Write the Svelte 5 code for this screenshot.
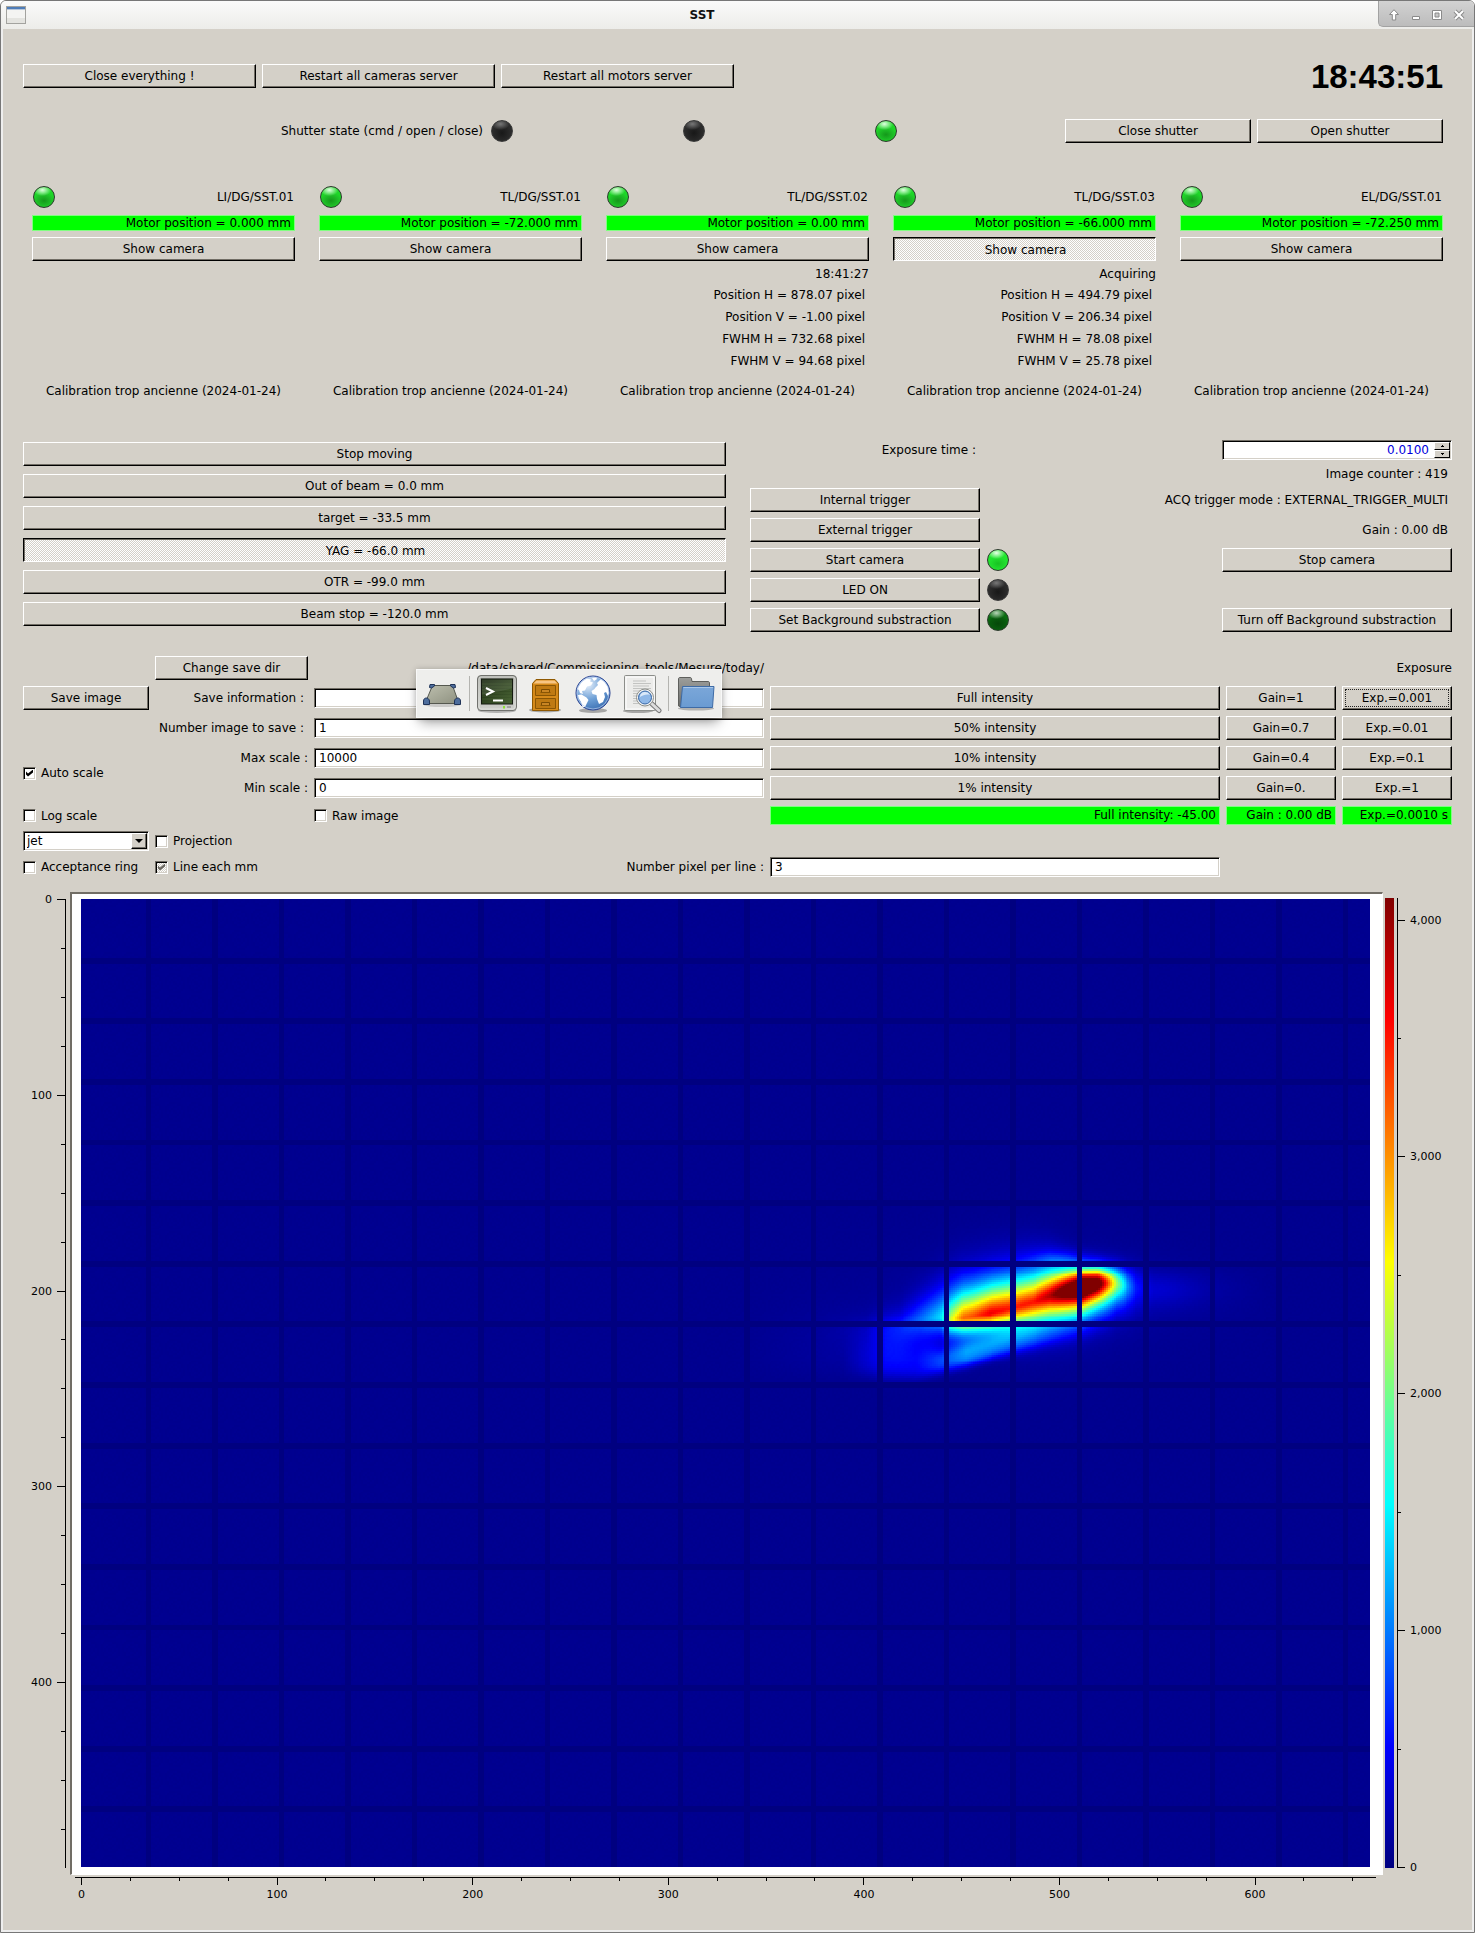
<script>
  import { onMount } from 'svelte';

  const cameras = [
    { name: 'LI/DG/SST.01', motor: '0.000' },
    { name: 'TL/DG/SST.01', motor: '-72.000' },
    {
      name: 'TL/DG/SST.02', motor: '0.00', status: '18:41:27',
      data: ['Position H = 878.07 pixel', 'Position V = -1.00 pixel', 'FWHM H = 732.68 pixel', 'FWHM V = 94.68 pixel']
    },
    {
      name: 'TL/DG/SST.03', motor: '-66.000', status: 'Acquiring', active: true,
      data: ['Position H = 494.79 pixel', 'Position V = 206.34 pixel', 'FWHM H = 78.08 pixel', 'FWHM V = 25.78 pixel']
    },
    { name: 'EL/DG/SST.01', motor: '-72.250' }
  ];

  const moves = ['Stop moving', 'Out of beam = 0.0 mm', 'target = -33.5 mm', 'YAG = -66.0 mm', 'OTR = -99.0 mm', 'Beam stop = -120.0 mm'];

  // Sensor geometry and axis ticks
  const W = 659;
  const H = 495;
  const MAX = 4095;
  const ticks = (end, step, major) =>
    Array.from({ length: Math.floor(end / step) + 1 }, (_, i) => ({ v: i * step, major: (i * step) % major === 0 }));
  const xTicks = ticks(W, 25, 100);
  const yTicks = ticks(H - 1, 25, 100);
  const zTicks = ticks(MAX, 500, 1000);

  let canvas;

  // Beam profile along u: [u, amplitude, centre, width above, width below, exponent above]
  const ridge = [
    [-200, 0, 400, 80, 80, 1.5],
    [60, 0.01, 400, 80, 80, 1.5],
    [200, 0.03, 395, 50, 60, 1.5],
    [300, 0.12, 385, 55, 60, 1.6],
    [360, 0.2, 365, 66, 56, 1.6],
    [420, 0.31, 355, 80, 50, 1.6],
    [450, 0.53, 364, 84, 44, 1.5],
    [490, 0.74, 357, 86, 46, 1.5],
    [520, 0.77, 352, 86, 48, 1.5],
    [570, 0.86, 342, 86, 50, 1.5],
    [640, 0.81, 325, 86, 60, 1.5],
    [700, 0.82, 308, 82, 66, 1.5],
    [750, 0.91, 291, 76, 68, 1.6],
    [800, 1.08, 278, 66, 68, 1.8],
    [850, 1.24, 267, 57, 66, 2],
    [895, 1.08, 256, 50, 62, 2],
    [925, 0.76, 254, 48, 62, 2],
    [950, 0.5, 256, 50, 58, 2],
    [980, 0.26, 262, 52, 60, 2],
    [1010, 0.1, 268, 60, 60, 2],
    [1060, 0.03, 272, 60, 60, 2],
    [1400, 0, 275, 60, 60, 2]
  ];

  // Secondary lobe below the main ridge
  const lobe = [
    [-200, 0, 480, 60, 40],
    [130, 0.01, 480, 70, 50],
    [220, 0.07, 480, 85, 52],
    [260, 0.105, 482, 90, 56],
    [350, 0.1, 492, 70, 48],
    [420, 0.17, 485, 40, 38],
    [500, 0.24, 462, 38, 40],
    [580, 0.2, 440, 38, 38],
    [680, 0.13, 412, 40, 40],
    [800, 0.05, 385, 40, 40],
    [950, 0, 360, 40, 40],
    [1400, 0, 360, 40, 40]
  ];

  function sample(table, u) {
    if (u <= table[0][0]) return table[0];
    for (let i = 1; i < table.length; i++) {
      if (u <= table[i][0]) {
        const a = table[i - 1];
        const b = table[i];
        const t = (u - a[0]) / (b[0] - a[0]);
        return a.map((p, k) => p + (b[k] - p) * t);
      }
    }
    return table[table.length - 1];
  }

  const clamp = (v) => Math.max(0, Math.min(1, v));
  const jet = (v) => [1.5 - Math.abs(4 * v - 3), 1.5 - Math.abs(4 * v - 2), 1.5 - Math.abs(4 * v - 1)].map((c) => clamp(c) * 255);
  const blob = (u, w, cu, cw, su, sw) => Math.exp(-(((u - cu) / su) ** 2) - ((w - cw) / sw) ** 2);

  onMount(() => {
    const ctx = canvas.getContext('2d');
    const image = ctx.createImageData(W, H);
    for (let x = 0; x < W; x++) {
      const u = (x - 367) * 5.868;
      const r = sample(ridge, u);
      const l = sample(lobe, u);
      for (let y = 0; y < H; y++) {
        const w = (y - 153) * 5.868;
        let v = 0.014 + ((x * 7 + y * 13 + x * y) % 11) * 0.0003;
        const d = w - r[2];
        v += r[1] * (d < 0 ? Math.exp(-((-d / r[3]) ** r[5])) : Math.exp(-((d / r[4]) ** 1.5)));
        const e = w - l[2];
        v += l[1] * (e < 0 ? Math.exp(-((e / l[3]) ** 2)) : Math.exp(-((e / l[4]) ** 3)));
        v += 0.025 * blob(u, w, 700, 300, 380, 140) + 0.06 * blob(u, w, 770, 180, 80, 25) + 0.025 * blob(u, w, 1080, 275, 110, 50);
        const onLine = (x > 30 && (x + 1) % 34 < 3) || (y > 28 && (y + 1) % 31 < 3);
        const [R, G, B] = jet(onLine ? 0 : Math.min(1, v));
        image.data.set([R, G, B, 255], (y * W + x) * 4);
      }
    }
    ctx.putImageData(image, 0, 0);
  });
</script>

<div class="window">
  <header class="titlebar">
    <svg class="appicon" width="20" height="18" viewBox="0 0 20 18" aria-hidden="true">
      <rect x=".5" y=".5" width="19" height="17" fill="#f4f4f2" stroke="#a3a39f" />
      <path d="M1 1h18v2H1z" fill="#4f7db8" />
      <path d="M1 3h18v1H1z" fill="#b7c7dc" />
      <path d="M1 12h18v5H1z" fill="#e4e4e0" />
    </svg>
    <h1>SST</h1>
    <div class="wincontrols">
      <button aria-label="Shade"><svg width="12" height="12" viewBox="0 0 12 12"><path d="M6 .7 10.5 5.5H7.7V11H4.3V5.5H1.5z" fill="#fff" stroke="#8a8a8a" /></svg></button>
      <button aria-label="Minimise"><svg width="12" height="12" viewBox="0 0 12 12"><path d="M2.5 7.5h7v3h-7z" fill="#fff" stroke="#8a8a8a" /></svg></button>
      <button aria-label="Maximise"><svg width="12" height="12" viewBox="0 0 12 12"><path d="M1.500 1.500h9v9h-9z" fill="#fff" stroke="#8a8a8a" /><path d="M4 4h4v4H4z" fill="#c8c8c8" stroke="#8a8a8a" /></svg></button>
      <button aria-label="Close"><svg width="12" height="12" viewBox="0 0 12 12"><path d="m2 2 8 8M10 2l-8 8" stroke="#8a8a8a" stroke-width="4" /><path d="m2 2 8 8M10 2l-8 8" stroke="#fff" stroke-width="2" /></svg></button>
    </div>
  </header>

  <main>
    <section class="servers">
      <button class="btn">Close everything !</button>
      <button class="btn">Restart all cameras server</button>
      <button class="btn">Restart all motors server</button>
      <time>18:43:51</time>
    </section>

    <section class="shutter">
      <span class="right">Shutter state (cmd / open / close)</span>
      <i class="led off"></i>
      <i class="led off"></i>
      <i class="led on"></i>
      <button class="btn">Close shutter</button>
      <button class="btn">Open shutter</button>
    </section>

    <section class="cameras">
      {#each cameras as cam}
        <article>
          <div class="camhead"><i class="led on"></i><span>{cam.name}</span></div>
          <div class="state">Motor position = {cam.motor} mm</div>
          <button class="btn" class:pressed={cam.active}>Show camera</button>
          <div class="status">{cam.status ?? ''}</div>
          <div class="measures">
            {#each cam.data ?? [] as line}<div>{line}</div>{/each}
          </div>
          <div class="calibration">Calibration trop ancienne (2024-01-24)</div>
        </article>
      {/each}
    </section>

    <section class="controls">
      <div class="moves">
        {#each moves as move, i}
          <button class="btn" class:pressed={i === 3}>{move}</button>
        {/each}
      </div>
      <div class="acquisition">
        <label class="explabel" for="exposure">Exposure time :</label>
        <div class="spin">
          <input id="exposure" type="number" step="0.0001" value="0.0100" />
          <div class="steps">
            <button aria-label="Increase"><svg width="3" height="2" viewBox="0 0 3 2"><path d="M1 0h1v1h1v1H0V1h1z" /></svg></button>
            <button aria-label="Decrease"><svg width="3" height="2" viewBox="0 0 3 2"><path d="M0 0h3v1H2v1H1V1H0z" /></svg></button>
          </div>
        </div>
        <span class="info">Image counter : 419</span>
        <button class="btn first">Internal trigger</button>
        <span class="info wide">ACQ trigger mode : EXTERNAL_TRIGGER_MULTI</span>
        <button class="btn first">External trigger</button>
        <span class="info">Gain : 0.00 dB</span>
        <button class="btn first">Start camera</button>
        <i class="led bright"></i>
        <button class="btn last">Stop camera</button>
        <button class="btn first">LED ON</button>
        <i class="led off"></i>
        <button class="btn first">Set Background substraction</button>
        <i class="led dim"></i>
        <button class="btn last">Turn off Background substraction</button>
      </div>
    </section>

    <section class="saving">
      <button class="btn c2 r1">Change save dir</button>
      <span class="right c3 r1">/data/shared/Commissioning_tools/Mesure/today/</span>
      <span class="right c6 r1">Exposure</span>

      <button class="btn c1 r2">Save image</button>
      <label class="right spaced c2 r2" for="info">Save information :</label>
      <input class="field c3 r2" id="info" type="text" />
      <button class="btn c4 r2">Full intensity</button>
      <button class="btn c5 r2">Gain=1</button>
      <button class="btn focus c6 r2">Exp.=0.001</button>

      <label class="right spaced c2 r3" for="count">Number image to save :</label>
      <input class="field c3 r3" id="count" type="text" value="1" />
      <button class="btn c4 r3">50% intensity</button>
      <button class="btn c5 r3">Gain=0.7</button>
      <button class="btn c6 r3">Exp.=0.01</button>

      <label class="check c1 r45"><input type="checkbox" checked />Auto scale</label>
      <label class="right c2 r4" for="max">Max scale :</label>
      <input class="field c3 r4" id="max" type="text" value="10000" />
      <button class="btn c4 r4">10% intensity</button>
      <button class="btn c5 r4">Gain=0.4</button>
      <button class="btn c6 r4">Exp.=0.1</button>

      <label class="right c2 r5" for="min">Min scale :</label>
      <input class="field c3 r5" id="min" type="text" value="0" />
      <button class="btn c4 r5">1% intensity</button>
      <button class="btn c5 r5">Gain=0.</button>
      <button class="btn c6 r5">Exp.=1</button>

      <label class="check c1 r6"><input type="checkbox" />Log scale</label>
      <label class="check c3 r6"><input type="checkbox" />Raw image</label>
      <div class="state tall c4 r6">Full intensity: -45.00</div>
      <div class="state tall c5 r6">Gain : 0.00 dB</div>
      <div class="state tall c6 r6">Exp.=0.0010 s</div>

      <div class="combo c1 r7">
        <select aria-label="Colour map"><option>jet</option></select>
        <span class="drop"><svg width="8" height="4" viewBox="0 0 8 4"><path d="M0 0h8L4 4z" /></svg></span>
      </div>
      <label class="check c2 r7"><input type="checkbox" />Projection</label>

      <label class="check c1 r8"><input type="checkbox" />Acceptance ring</label>
      <label class="check c2 r8"><input class="partial" type="checkbox" checked />Line each mm</label>
      <label class="right c3 r8" for="pixels">Number pixel per line :</label>
      <input class="field c4 r8" id="pixels" type="text" value="3" />

      <nav class="dock" aria-label="Launcher">
        <button aria-label="Show desktop">
          <svg width="42" height="42" viewBox="0 0 42 42">
            <ellipse cx="21" cy="32" rx="18" ry="2" fill="#000" opacity=".15" />
            <path d="M11.500 12.500h20L38 30.500H4z" fill="url(#pad)" stroke="#55584f" />
            <g fill="#4d6d9c" stroke="#1f3358">
              <path d="M8.500 14.500 9 11.500h4.500v1.500l-3 2zM34.500 14.500 34 11.500h-4.500v1.500l3 2z" />
              <path d="M2.500 31.500V28c0-4 5.500-4 6 0v3.500zM39.500 31.500V28c0-4-5.500-4-6 0v3.500z" />
            </g>
            <defs><linearGradient id="pad" x1="0" y1="0" x2="1" y2="1"><stop stop-color="#bdbfae" /><stop offset="1" stop-color="#8e9180" /></linearGradient></defs>
          </svg>
        </button>
        <i class="sep"></i>
        <button aria-label="Terminal">
          <svg width="42" height="42" viewBox="0 0 42 42">
            <ellipse cx="21" cy="37.500" rx="19" ry="2.500" fill="#000" opacity=".25" />
            <rect x="1.500" y="2.500" width="39" height="35" rx="3.500" fill="url(#bezel)" stroke="#70716d" />
            <rect x="3" y="4" width="36" height="32" rx="2" fill="none" stroke="#e4e5e1" opacity=".8" />
            <rect x="5.500" y="6" width="31" height="25" fill="url(#screen)" stroke="#141a10" />
            <path d="M6 6.500h30v9L6 22z" fill="#fff" opacity=".1" />
            <path d="M6 11h30M6 14h30M6 17h30M6 20h30M6 23h30M6 26h30" stroke="#6e8a52" stroke-width=".5" opacity=".5" />
            <path d="m10 15 7 3.500-7 3.500" fill="none" stroke="#fff" stroke-width="2" />
            <path d="M17 27.500h10" stroke="#fff" stroke-width="2" />
            <path d="M28 33v2.500" stroke="#8be234" stroke-width="2" /><path d="M31 34h4" stroke="#777" />
            <defs>
              <linearGradient id="bezel" x1="0" y1="0" x2="0" y2="1"><stop stop-color="#a5a7a1" /><stop offset="1" stop-color="#cfd0cc" /></linearGradient>
              <linearGradient id="screen" x1="0" y1="0" x2="1" y2="1"><stop stop-color="#18260f" /><stop offset="1" stop-color="#466132" /></linearGradient>
            </defs>
          </svg>
        </button>
        <button aria-label="File manager">
          <svg width="42" height="42" viewBox="0 0 42 42">
            <ellipse cx="21" cy="37" rx="16" ry="2.500" fill="#000" opacity=".3" />
            <path d="M8.500 10.500 12 6.500h19l3.500 4v27h-26z" fill="#d68a1a" stroke="#8f5902" />
            <path d="M9.500 10.500 12.500 7.500h18l3 3z" fill="#f7c583" />
            <path d="M11.500 12.500h20v10h-20zM11.500 25.500h20v10h-20z" fill="#bf7a13" stroke="#8a5604" />
            <path d="M17.500 19.500v-3h8v3M17.500 32.500v-3h8v3" fill="#c98524" stroke="#7c4c02" />
            <path d="M16.500 19.500h10M16.500 32.500h10" stroke="#8a5604" />
          </svg>
        </button>
        <button aria-label="Web browser">
          <svg width="42" height="42" viewBox="0 0 42 42">
            <ellipse cx="21" cy="37.500" rx="14" ry="2.500" fill="#000" opacity=".3" />
            <circle cx="21" cy="20" r="17" fill="url(#sea)" stroke="#2a4290" />
            <g fill="#fff">
              <path d="M7 13c2-4 5-6.500 8-7.500l4 1-1 2 3 1-2 3-4 1-2 4-3 .500 1 3-3-1-1-3-2-1z" />
              <path d="M6 22l3.500-.5 5 3 2 2.500-1.500 3-2 4-2.500 0-1.500-5-2.500-4z" />
              <path d="M23 15l3-3-1-2 4-4 4 3 3 5 1 6-1 3-2-4-2 1 1 4-2 5-4 2-2-5-.5-4-4-1-1-3 3-2z" />
              <path d="M20 5l4-1 1 2-3 2z" />
            </g>
            <circle cx="21" cy="20" r="16" fill="none" stroke="#b9cdee" opacity=".7" />
            <defs><radialGradient id="sea" cx=".35" cy=".25" r=".9"><stop stop-color="#e6f0fb" /><stop offset=".5" stop-color="#6d9fd6" /><stop offset="1" stop-color="#2d62a8" /></radialGradient></defs>
          </svg>
        </button>
        <button aria-label="Application finder">
          <svg width="42" height="42" viewBox="0 0 42 42">
            <ellipse cx="18" cy="38" rx="15" ry="2" fill="#000" opacity=".3" />
            <rect x="4.500" y="2.500" width="31" height="35" rx="1" fill="#ececea" stroke="#8c8e8a" />
            <path d="M6 4h28v32H6z" fill="none" stroke="#fff" />
            <path d="M13 8h13M13 10.500h18M13 13h16M13 15.500h18M13 18h10M13 20.500h7M13 23h6M13 25.500h6M13 28h6M13 30.500h8" stroke="#c2c3c1" />
            <path d="m31 30 8 7.500" stroke="#777" stroke-width="5" stroke-linecap="round" />
            <path d="m31 30 8 7.500" stroke="#ddd" stroke-width="3" stroke-linecap="round" />
            <circle cx="25" cy="24.500" r="8.500" fill="#f5f5f5" stroke="#8b8d89" />
            <circle cx="25" cy="24.500" r="6.500" fill="#8fb8e8" stroke="#3465a4" />
            <path d="M20 24c0-6 8-6.500 10-2-3-1-7 0-10 2z" fill="#dbe9f9" />
          </svg>
        </button>
        <i class="sep"></i>
        <button aria-label="Home folder">
          <svg width="42" height="42" viewBox="0 0 42 42">
            <ellipse cx="21" cy="35.500" rx="18" ry="2" fill="#000" opacity=".25" />
            <path d="M3.500 33V6c0-1 .5-1.500 1.500-1.500h10c1 0 1.500.5 1.500 1.500l.5 2.500h16c1 0 1.500.5 1.500 1.500v20L6 34z" fill="url(#back)" stroke="#5e5f5c" />
            <path d="M7.500 13.500h31.500L37.500 34.500h-32z" fill="url(#front)" stroke="#3e6ba6" />
            <path d="M8.500 14.500h29.500" stroke="#a9c7e8" />
            <defs>
              <linearGradient id="back" x1="0" y1="0" x2="0" y2="1"><stop stop-color="#9d9e9b" /><stop offset="1" stop-color="#6b6c69" /></linearGradient>
              <linearGradient id="front" x1="0" y1="0" x2="0" y2="1"><stop stop-color="#7ba7d9" /><stop offset="1" stop-color="#6a9bd2" /></linearGradient>
            </defs>
          </svg>
        </button>
      </nav>
    </section>

    <section class="plot">
      <div class="axis left">
        {#each yTicks as t}
          <i class:major={t.major} style="top:{(t.v / H) * 100}%">{#if t.major}<b>{t.v}</b>{/if}</i>
        {/each}
      </div>
      <div class="frame"><canvas bind:this={canvas} width={W} height={H}></canvas></div>
      <div class="colorbar"></div>
      <div class="axis scale">
        {#each zTicks as t}
          <i class:major={t.major} style="bottom:{(t.v / MAX) * 100}%">{#if t.major}<b>{t.v.toLocaleString('en-US')}</b>{/if}</i>
        {/each}
      </div>
      <div class="axis bottom">
        {#each xTicks as t}
          <i class:major={t.major} style="left:{(t.v / W) * 100}%">{#if t.major}<b>{t.v}</b>{/if}</i>
        {/each}
      </div>
    </section>
  </main>
</div>

<style>
  :global(body) {
    margin: 0;
    background: #fff;
  }

  .window {
    box-sizing: border-box;
    min-height: 100vh;
    border: 1px solid #777;
    border-radius: 6px 6px 0 0;
    background: #d4d0c8;
    box-shadow: inset 0 0 0 2px #eee;
    color: #000;
    font: 12px/16px 'DejaVu Sans', sans-serif;
    overflow: hidden;
  }

  button, input, select {
    box-sizing: border-box;
    margin: 0;
    padding: 0;
    border: 0;
    border-radius: 0;
    background: none;
    color: inherit;
    font: inherit;
    min-width: 0;
  }

  .titlebar {
    display: flex;
    align-items: center;
    height: 28px;
    background: linear-gradient(#fafafa, #ecece9);
  }
  .appicon { margin-left: 5px; }
  h1 {
    flex: 1;
    margin: 0;
    text-align: center;
    font-size: 12px;
    color: #111;
  }
  .wincontrols {
    align-self: flex-start;
    display: flex;
    justify-content: space-around;
    align-items: center;
    box-sizing: border-box;
    width: 96px;
    height: 26px;
    padding: 2px 4px 0;
    border: 1px solid #a2a2a2;
    border-width: 0 0 1px 1px;
    border-bottom-left-radius: 5px;
    background: linear-gradient(#d2d2d2, #bcbcbc);
  }
  .wincontrols button { display: flex; }

  main { padding: 35px 22px 30px; }

  .btn {
    height: 24px;
    border: 1px solid;
    border-color: #fff #000 #000 #fff;
    box-shadow: inset -1px -1px 0 #716d65;
    background: #d4d0c8;
    text-align: center;
    white-space: nowrap;
  }
  .btn.pressed {
    border-color: #000 #fff #fff #000;
    box-shadow: inset 1px 1px 0 #716d65;
    background: repeating-conic-gradient(#fff 0 25%, #d4d0c8 0 50%) 0 0 / 2px 2px;
    padding: 2px 0 0 2px;
  }
  .btn.focus {
    outline: 1px dotted #222;
    outline-offset: -4px;
  }

  .led {
    display: block;
    box-sizing: border-box;
    width: 22px;
    height: 22px;
    border: 1px solid #2b3b2b;
    border-radius: 50%;
  }
  .led.on { background: radial-gradient(ellipse 9px 6px at 42% 15%, #e0ffe0, transparent), radial-gradient(ellipse 11px 8px at 50% 68%, #15981b 0, #1fc428 75%, #1ed628 100%); }
  .led.bright { background: radial-gradient(ellipse 9px 6px at 42% 15%, #e8ffe8, transparent), radial-gradient(ellipse 11px 8px at 50% 68%, #18c222 0, #22e02f 75%, #20e82d 100%); }
  .led.dim { background: radial-gradient(ellipse 9px 6px at 42% 15%, #b8d4b8, transparent), radial-gradient(ellipse 11px 8px at 50% 68%, #06480a 0, #095c0e 75%, #0a6c10 100%); }
  .led.off { border-color: #3a3a3a; background: radial-gradient(ellipse 9px 6px at 42% 15%, #777, transparent), radial-gradient(circle at 50% 60%, #181818 0, #2c2c2c 60%, #242424 100%); }

  .right { text-align: right; white-space: nowrap; }

  .servers, .shutter {
    display: grid;
    align-items: center;
    gap: 6px;
    padding-right: 9px;
  }
  .servers { grid-template-columns: repeat(3, 233fr) 703fr; }
  time {
    height: 24px;
    text-align: right;
    font: bold 33px/26px 'Liberation Sans', Arial, sans-serif;
  }
  .shutter {
    grid-template-columns: 460fr repeat(5, 186fr);
    margin-top: 31px;
  }
  .shutter .led { margin-left: 2px; }

  .cameras {
    display: grid;
    grid-template-columns: repeat(5, 1fr);
    gap: 24px;
    margin-top: 43px;
    padding: 0 9px;
  }
  article { display: flex; flex-direction: column; }
  .camhead {
    display: flex;
    justify-content: space-between;
    align-items: center;
    padding: 0 1px;
    margin-bottom: 7px;
  }
  .state {
    box-sizing: border-box;
    height: 16px;
    margin-bottom: 6px;
    padding-right: 3px;
    border: 1px solid #80ff80;
    background: #0f0;
    text-align: right;
    line-height: 14px;
    white-space: nowrap;
  }
  .state.tall { height: 19px; margin: 0; line-height: 16px; }
  .status { height: 16px; margin-top: 5px; text-align: right; }
  .measures {
    height: 88px;
    margin-top: 2px;
    padding-right: 4px;
    text-align: right;
    line-height: 22px;
  }
  .calibration { margin-top: 11px; text-align: center; white-space: nowrap; }

  .controls {
    display: grid;
    grid-template-columns: 703fr 702fr;
    gap: 24px;
    margin-top: 41px;
  }
  .moves { display: grid; gap: 8px; padding-top: 2px; align-content: start; }
  .acquisition {
    display: grid;
    grid-template-columns: 230fr 23px 201fr 230fr;
    grid-template-rows: 20px 16px repeat(5, 24px);
    gap: 6px;
    align-items: center;
  }
  .acquisition .led { margin-left: 1px; }
  .first { grid-column: 1; }
  .last, .spin { grid-column: 4; }
  .info { grid-column: 3 / 5; text-align: right; padding-right: 4px; white-space: nowrap; }
  .explabel { grid-column: 1; padding-right: 4px; text-align: right; }

  .spin, .field, .combo {
    box-sizing: border-box;
    height: 20px;
    border: 1px solid;
    border-color: #716d65 #fff #fff #716d65;
    box-shadow: inset 1px 1px 0 #000, inset -1px -1px 0 #d4d0c8;
    background: #fff;
  }
  .spin { display: flex; padding: 1px; }
  .spin input {
    flex: 1;
    padding-right: 5px;
    color: #00d;
    text-align: right;
    appearance: textfield;
  }
  .spin input::-webkit-inner-spin-button { appearance: none; margin: 0; }
  .steps { display: flex; flex-direction: column; width: 16px; }
  .steps button {
    flex: 1;
    display: flex;
    align-items: center;
    justify-content: center;
    border: 1px solid;
    border-color: #fff #000 #000 #fff;
    background: #d4d0c8;
  }
  .field { width: 100%; padding: 0 4px; }

  .saving {
    position: relative;
    display: grid;
    grid-template-columns: 126fr 153fr 450fr 450fr 110fr 110fr;
    grid-template-rows: repeat(5, 24px) 19px 20px 20px;
    gap: 6px;
    align-items: center;
    margin-top: 24px;
  }
  .c1 { grid-column: 1; }
  .c2 { grid-column: 2; }
  .c3 { grid-column: 3; }
  .c4 { grid-column: 4; }
  .c5 { grid-column: 5; }
  .c6 { grid-column: 6; }
  .r1 { grid-row: 1; }
  .r2 { grid-row: 2; }
  .r3 { grid-row: 3; }
  .r4 { grid-row: 4; }
  .r5 { grid-row: 5; }
  .r6 { grid-row: 6; }
  .r7 { grid-row: 7; }
  .r8 { grid-row: 8; }
  .r45 { grid-row: 4 / 6; }
  .spaced { padding-right: 4px; }

  .check {
    display: flex;
    align-items: center;
    gap: 5px;
    white-space: nowrap;
  }
  .check input {
    appearance: none;
    display: flex;
    width: 13px;
    height: 13px;
    border: 1px solid;
    border-color: #716d65 #fff #fff #716d65;
    box-shadow: inset 1px 1px 0 #000, inset -1px -1px 0 #d4d0c8;
    background: #fff;
  }
  .check input:checked::after {
    content: '';
    width: 7px;
    height: 7px;
    margin: 2px;
    background: #000;
    clip-path: polygon(0 2px, 2px 4px, 7px 0, 7px 3px, 2px 7px, 0 5px);
  }
  .check .partial { background: repeating-conic-gradient(#fff 0 25%, #d4d0c8 0 50%) 0 0 / 2px 2px; }
  .check .partial:checked::after { background: #6d6962; }

  .combo { display: flex; padding: 1px; position: relative; }
  select { appearance: none; width: 100%; padding-left: 2px; }
  .drop {
    position: absolute;
    inset: 1px 1px 1px auto;
    display: flex;
    align-items: center;
    justify-content: center;
    box-sizing: border-box;
    width: 16px;
    border: 1px solid;
    border-color: #fff #000 #000 #fff;
    box-shadow: inset -1px -1px 0 #716d65;
    background: #d4d0c8;
    pointer-events: none;
  }

  .dock {
    position: absolute;
    top: 13px;
    left: 393px;
    display: flex;
    align-items: center;
    gap: 6px;
    box-sizing: border-box;
    height: 49px;
    padding: 0 4px;
    border: 1px solid #f8f8f8;
    background: #eeeeec;
    box-shadow: 0 8px 12px -4px #0006, 0 0 6px #0003;
  }
  .dock button { display: flex; }
  .sep { width: 1px; height: 35px; background: #b4b4b0; }

  .plot {
    display: grid;
    grid-template-columns: 47px 1fr 9px 60px;
    grid-template-rows: auto 24px;
    margin-top: 15px;
  }
  .frame {
    padding: 5px 12px 7px 9px;
    border: 2px solid;
    border-color: #716d65 #fff #fff #716d65;
    border-width: 2px 1px 1px 2px;
    background: #fff;
  }
  canvas {
    display: block;
    width: 100%;
    aspect-ratio: 1289 / 968;
    image-rendering: pixelated;
  }
  .colorbar {
    margin: 6px -2px 7px 2px;
    background: linear-gradient(to top, #000080, #00f 12.5%, #0ff 37.5%, #ff0 62.5%, #f00 87.5%, #800000);
  }
  .axis { position: relative; font-size: 11px; line-height: 14px; }
  .axis i { position: absolute; background: #000; }
  .axis b { position: absolute; font-weight: normal; font-style: normal; }

  .left { margin: 7px 4px 7px 0; border-right: 1px solid #000; }
  .left i { right: 0; width: 4px; height: 1px; }
  .left .major { width: 8px; }
  .left b { right: 13px; top: -6px; }

  .scale { margin: 6px 0 7px 5px; border-left: 1px solid #000; }
  .scale i { left: 0; width: 3px; height: 1px; }
  .scale .major { width: 7px; }
  .scale b { left: 12px; top: -6px; }

  .bottom { grid-column: 2; margin: 2px 13px 0 11px; }
  .bottom::before {
    content: '';
    position: absolute;
    inset: 0 -6px auto -6px;
    height: 1px;
    background: #000;
  }
  .bottom i { top: 0; width: 1px; height: 4px; }
  .bottom .major { height: 8px; }
  .bottom b { top: 11px; left: -20px; width: 41px; text-align: center; }
</style>
